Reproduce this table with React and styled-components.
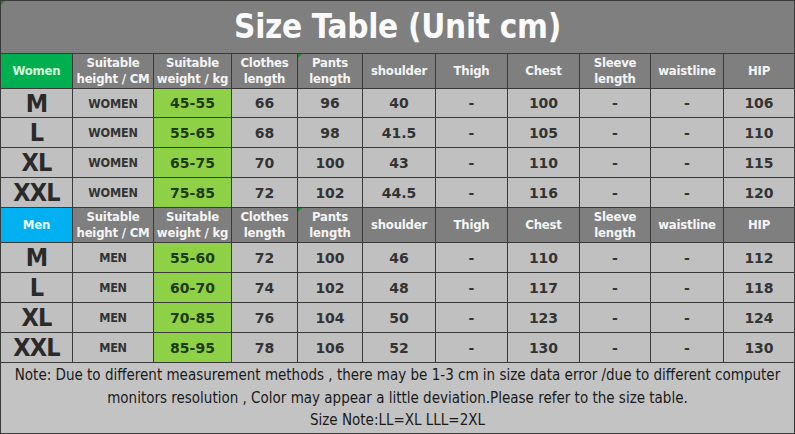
import React from "react";
import styled, { createGlobalStyle, css } from "styled-components";

const Global = createGlobalStyle`
  html, body { margin: 0; padding: 0; background: #fff; }
  body { font-family: "DejaVu Sans Condensed", "DejaVu Sans", sans-serif; }
`;

const Sheet = styled.div`
  width: 795px;
  height: 434px;
  box-sizing: border-box;
  padding: 1px;
  background: #3a3a3a;
  display: grid;
  grid-template-columns: 71px 80px 77px 65px 64px 72px 71px 71px 70px 72px 70px;
  grid-template-rows: 52px 34px 28px 29px 29px 29px 34px 29px 29px 29px 29px 70px;
  gap: 1px;
`;

const Title = styled.div`
  grid-column: 1 / -1;
  background: #7f7f7f;
  color: #fafafa;
  display: flex;
  align-items: center;
  justify-content: center;
  font-family: "DejaVu Sans Condensed", "DejaVu Sans", sans-serif;
  font-stretch: condensed;
  font-weight: bold;
  font-size: 33px;
  letter-spacing: -0.3px;
  padding-bottom: 1px;
  position: relative;
`;

const Mark = styled.span`
  position: absolute;
  left: 0;
  top: 0;
  width: 0;
  height: 0;
  border-top: 4px solid #1e8a2e;
  border-right: 4px solid transparent;
`;

const Head = styled.div`
  position: relative;
  background: ${(p) => (p.$kind === "women" ? "#00b050" : p.$kind === "men" ? "#00b0f0" : "#7f7f7f")};
  color: ${(p) => (p.$kind === "women" ? "#d8f5dc" : p.$kind === "men" ? "#e6f7ff" : "#f4f4f4")};
  display: flex;
  align-items: center;
  justify-content: center;
  text-align: center;
  font-family: "DejaVu Sans Condensed", "DejaVu Sans", sans-serif;
  font-stretch: condensed;
  font-weight: bold;
  font-size: 13px;
  line-height: 16px;
  letter-spacing: -0.2px;
  white-space: pre-line;
`;

const Cell = styled.div`
  background: ${(p) => (p.$green ? "#8fd146" : "#c0c0c0")};
  color: ${(p) => (p.$green ? "#1e3a10" : "#333")};
  display: flex;
  align-items: center;
  justify-content: center;
  font-family: "DejaVu Sans", sans-serif;
  font-weight: bold;
  font-size: 14px;
  ${(p) =>
    p.$small &&
    css`
      font-family: "DejaVu Sans Condensed", "DejaVu Sans", sans-serif;
      font-stretch: condensed;
      font-size: 12.5px;
      letter-spacing: -0.2px;
    `}
  ${(p) =>
    p.$size &&
    css`
      font-family: "DejaVu Sans Condensed", "DejaVu Sans", sans-serif;
      font-stretch: condensed;
      font-size: 25px;
      color: #2a2a2a;
      letter-spacing: -0.8px;
    `}
`;

const Footer = styled.div`
  grid-column: 1 / -1;
  background: #c3c3c3;
  color: #1a1a1a;
  display: flex;
  flex-direction: column;
  align-items: center;
  justify-content: flex-start;
  padding-top: 1px;
  font-family: "Liberation Sans Narrow", "DejaVu Sans Condensed", sans-serif;
  font-stretch: condensed;
  font-size: 15px;
  line-height: 22.5px;
  text-align: center;
`;

const headers = [
  "Suitable\nheight / CM",
  "Suitable\nweight / kg",
  "Clothes\nlength",
  "Pants\nlength",
  "shoulder",
  "Thigh",
  "Chest",
  "Sleeve\nlength",
  "waistline",
  "HIP",
];

const women = [
  ["M", "45-55", "66", "96", "40", "100", "106"],
  ["L", "55-65", "68", "98", "41.5", "105", "110"],
  ["XL", "65-75", "70", "100", "43", "110", "115"],
  ["XXL", "75-85", "72", "102", "44.5", "116", "120"],
];

const men = [
  ["M", "55-60", "72", "100", "46", "110", "112"],
  ["L", "60-70", "74", "102", "48", "117", "118"],
  ["XL", "70-85", "76", "104", "50", "123", "124"],
  ["XXL", "85-95", "78", "106", "52", "130", "130"],
];

function HeaderRow({ kind, label }) {
  return (
    <>
      <Head $kind={kind}>{label}</Head>
      {headers.map((h, i) => (
        <Head key={i}>
          {i === 3 && <Mark />}
          {h}
        </Head>
      ))}
    </>
  );
}

function DataRows({ rows, who }) {
  return rows.map(([size, weight, clothes, pants, shoulder, chest, hip]) => (
    <React.Fragment key={who + size}>
      <Cell $size>{size}</Cell>
      <Cell $small>{who}</Cell>
      <Cell $green>{weight}</Cell>
      <Cell>{clothes}</Cell>
      <Cell>{pants}</Cell>
      <Cell>{shoulder}</Cell>
      <Cell>-</Cell>
      <Cell>{chest}</Cell>
      <Cell>-</Cell>
      <Cell>-</Cell>
      <Cell>{hip}</Cell>
    </React.Fragment>
  ));
}

export default function App() {
  return (
    <>
      <Global />
      <Sheet>
        <Title>
          <Mark />
          Size Table (Unit cm)
        </Title>
        <HeaderRow kind="women" label="Women" />
        <DataRows rows={women} who="WOMEN" />
        <HeaderRow kind="men" label="Men" />
        <DataRows rows={men} who="MEN" />
        <Footer>
          <div>
            Note: Due to different measurement methods , there may be 1-3 cm in size data error /due to different computer
          </div>
          <div>monitors resolution , Color may appear a little deviation.Please refer to the size table.</div>
          <div>Size Note:LL=XL LLL=2XL</div>
        </Footer>
      </Sheet>
    </>
  );
}
